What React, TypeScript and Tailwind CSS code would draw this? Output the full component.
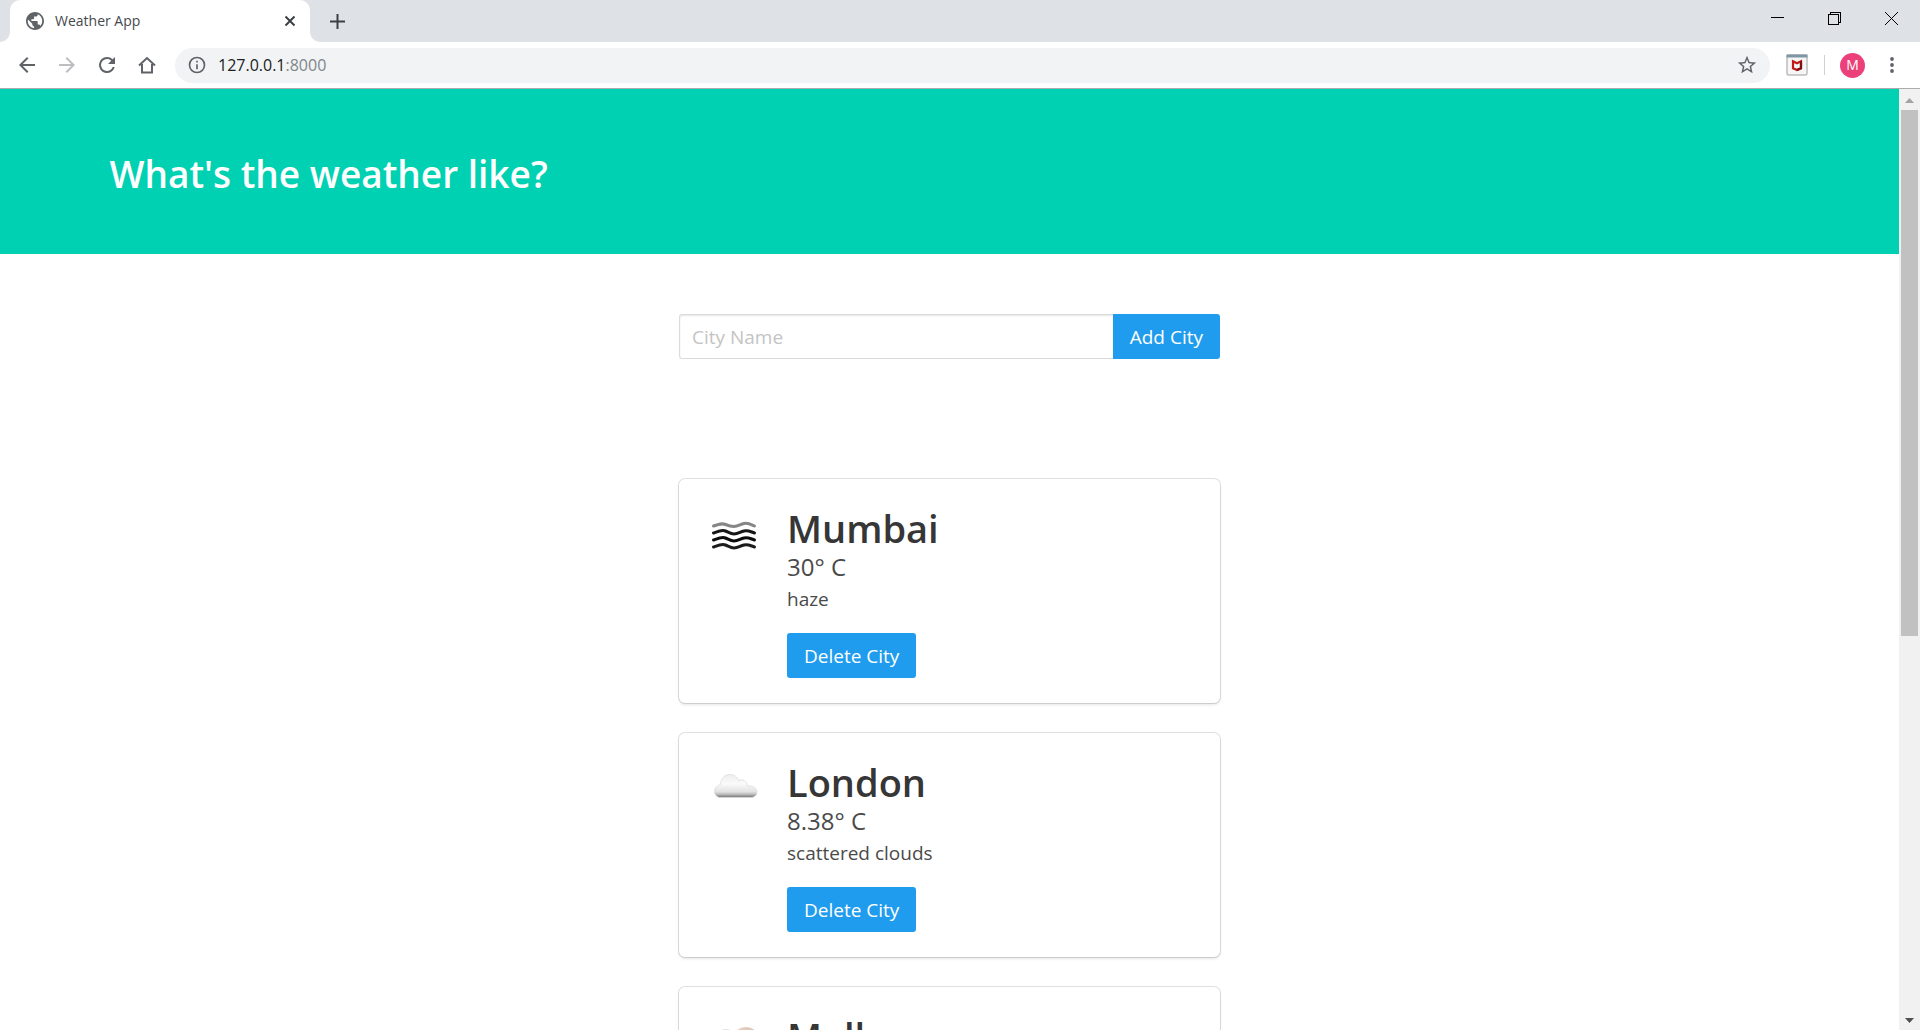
import React from "react";

type IconKind = "mist" | "cloud" | "partly";

interface City {
  name: string;
  temperature: string;
  description: string;
  icon: IconKind;
}

const cities: City[] = [
  { name: "Mumbai", temperature: "30° C", description: "haze", icon: "mist" },
  { name: "London", temperature: "8.38° C", description: "scattered clouds", icon: "cloud" },
  { name: "Melbourne", temperature: "17° C", description: "few clouds", icon: "partly" },
];

function Glyph({ d, className }: { d: string; className: string }) {
  return (
    <svg viewBox="0 0 24 24" className={className} fill="currentColor" aria-hidden="true">
      <path d={d} />
    </svg>
  );
}

const paths = {
  globe:
    "M12 0C5.4 0 0 5.4 0 12s5.4 12 12 12 12-5.4 12-12S18.600 0 12 0zM10.800 21.500C6 21 2.400 17 2.400 12c0-.7.1-1.400.2-2.100L8.400 15.600v1.200c0 1.300 1.100 2.400 2.400 2.400v2.300zM19 18.500c-.3-1-1.200-1.700-2.200-1.700h-1.200v-3.600c0-.7-.5-1.200-1.200-1.200H7.200V9.600h2.400c.7 0 1.200-.5 1.200-1.200V6h2.400c1.300 0 2.400-1.100 2.400-2.400v-.5c3.500 1.400 6 4.900 6 8.900 0 2.500-1 4.800-2.600 6.500z",
  back: "M20 11H7.830l5.590-5.590L12 4l-8 8 8 8 1.410-1.410L7.830 13H20v-2z",
  forward: "M4 13h12.170l-5.590 5.590L12 20l8-8-8-8-1.410 1.410L16.170 11H4v2z",
  reload:
    "M17.650 6.350A7.960 7.960 0 0 0 12 4a8 8 0 1 0 7.730 10h-2.080A6 6 0 1 1 12 6c1.660 0 3.140.69 4.220 1.780L13 11h7V4l-2.350 2.350z",
  info: "M11 7h2v2h-2zm0 4h2v6h-2zm1-9a10 10 0 1 0 0 20 10 10 0 0 0 0-20zm0 18a8 8 0 1 1 0-16 8 8 0 0 1 0 16z",
  star: "M22 9.240l-7.190-.62L12 2 9.190 8.630 2 9.240l5.460 4.730L5.820 21 12 17.270 18.180 21l-1.630-7.030L22 9.240zM12 15.400l-3.760 2.270 1-4.280-3.320-2.880 4.380-.38L12 6.100l1.710 4.040 4.380.38-3.320 2.880 1 4.280L12 15.400z",
};

function WeatherIcon({ kind }: { kind: IconKind }) {
  if (kind === "mist") {
    return (
      <svg viewBox="0 0 63 63" className="size-[63px] shrink-0" fill="none" strokeWidth="3" strokeLinecap="round" role="img" aria-label="haze">
        <path stroke="#868686" d="M9.500 22C15 20 18 19 21.500 20.500C25 22 27 22.500 30 22.500C34 22.500 36 20.500 40 19.500C44 18.500 46 20 50.500 22" />
        <path stroke="#161616" d="M9.500 29C15 27 18 25.500 21.500 27C25 28.500 27 30 30 30C34 30 36 28 40 27C44 26 46 27.500 50.500 29" />
        <path stroke="#0b0b0b" d="M9.500 36C15 34 18 32.500 21.500 34C25 35.500 27 37 30 37C34 37 36 35 40 34C44 33 46 34.500 50.500 36" />
        <path stroke="#1c1c1c" d="M9.500 43C15 41 18 39.500 21.500 41C25 42.500 27 44 30 44C34 44 36 42 40 41C44 40 46 41.500 50.500 43" />
      </svg>
    );
  }
  const gradientId = `cloud-${kind}`;
  return (
    <svg viewBox="0 0 63 63" className="size-[63px] shrink-0" role="img" aria-label={kind === "cloud" ? "scattered clouds" : "few clouds"}>
      <defs>
        <linearGradient id={gradientId} x1="0" y1="0" x2="0" y2="1">
          <stop offset="0" stopColor="#eeeeee" />
          <stop offset="0.4" stopColor="#fafafa" />
          <stop offset="0.75" stopColor="#e2e2e2" />
          <stop offset="0.86" stopColor="#bdbdbd" />
          <stop offset="1" stopColor="#6f6f6f" />
        </linearGradient>
        <linearGradient id="sun" x1="0" y1="0" x2="1" y2="1">
          <stop offset="0" stopColor="#e9d3c4" />
          <stop offset="1" stopColor="#c9b4a6" />
        </linearGradient>
      </defs>
      {kind === "partly" && <circle cx="42" cy="29" r="14" fill="url(#sun)" />}
      <path
        d="M15.500 39.500C12.500 39 10.500 36.500 10.500 33.500C10.500 30 13 27.500 16.500 26.500C17 20.500 20.500 16.500 26 16.500C30 16.500 33 18.500 34.500 22.500C38.500 20.500 43 23 43.500 28C48.500 27.500 53 30 53 34C53 37 51 39 48 39.500Z"
        transform={kind === "partly" ? "translate(-4 1)" : undefined}
        fill={`url(#${gradientId})`}
        stroke="#dcdcdc"
        strokeWidth="0.8"
      />
    </svg>
  );
}

function TabStrip() {
  return (
    <div className="flex h-[42px] shrink-0 bg-[#dee1e6]">
      <div className="w-[10px] bg-white">
        <div className="h-full w-full rounded-br-[10px] bg-[#dee1e6]" />
      </div>
      <div className="flex w-[300px] items-center rounded-t-[10px] bg-white pr-3 pl-4">
        <Glyph d={paths.globe} className="size-[18px] text-[#5f6368]" />
        <span className="ml-[11px] flex-1 text-sm text-[#45494d]">Weather App</span>
        <button type="button" aria-label="Close tab" className="flex size-4 items-center justify-center text-[#3c4043]">
          <svg viewBox="0 0 12 12" className="size-3" stroke="currentColor" strokeWidth="2">
            <path d="M1.500 1.500l9 9M10.500 1.500l-9 9" />
          </svg>
        </button>
      </div>
      <div className="w-[10px] bg-white">
        <div className="h-full w-full rounded-bl-[10px] bg-[#dee1e6]" />
      </div>
      <button type="button" aria-label="New tab" className="flex w-[35px] items-center justify-center text-[#3c4043]">
        <svg viewBox="0 0 15 15" className="size-[15px]" stroke="currentColor" strokeWidth="2">
          <path d="M7.500 0v15M0 7.500h15" />
        </svg>
      </button>
      <div className="ml-auto flex h-9 text-black">
        <button type="button" aria-label="Minimize" className="flex w-[57px] items-center justify-center">
          <svg viewBox="0 0 13 13" className="size-[13px]" stroke="currentColor" shapeRendering="crispEdges">
            <path d="M0 5.500h13" />
          </svg>
        </button>
        <button type="button" aria-label="Restore" className="flex w-[57px] items-center justify-center">
          <svg viewBox="0 0 13 13" className="size-[13px]" fill="none" stroke="currentColor" shapeRendering="crispEdges">
            <path d="M.5 2.500h10v10H.5zM2.500 2V.5h10v10H11" />
          </svg>
        </button>
        <button type="button" aria-label="Close window" className="flex w-[57px] items-center justify-center">
          <svg viewBox="0 0 13 13" className="size-[13px]" stroke="currentColor">
            <path d="M0 0l13 13M13 0L0 13" />
          </svg>
        </button>
      </div>
    </div>
  );
}

function Toolbar() {
  return (
    <div className="flex h-[47px] shrink-0 items-center border-b border-[#a9abad] bg-white pl-[7px] text-[#5f6368]">
      <button type="button" aria-label="Back" className="flex w-10 justify-center">
        <Glyph d={paths.back} className="size-6" />
      </button>
      <button type="button" aria-label="Forward" className="flex w-10 justify-center text-[#bcbec1]">
        <Glyph d={paths.forward} className="size-6" />
      </button>
      <button type="button" aria-label="Reload" className="flex w-10 justify-center">
        <Glyph d={paths.reload} className="size-6" />
      </button>
      <button type="button" aria-label="Home" className="flex w-10 justify-center">
        <svg viewBox="0 0 18 18" className="size-[18px]" fill="none" stroke="currentColor" strokeWidth="2">
          <path d="M1 9.500L9 2l8 7.500M4 8v8.500h10V8" />
        </svg>
      </button>
      <div className="ml-2 flex h-[35px] flex-1 items-center rounded-full bg-[#f1f3f4] pr-3 pl-3">
        <Glyph d={paths.info} className="size-5" />
        <span className="ml-[11px] flex-1 text-base">
          <span className="text-[#202124]">127.0.0.1</span>
          <span className="text-[#80868b]">:8000</span>
        </span>
        <button type="button" aria-label="Bookmark this page">
          <Glyph d={paths.star} className="size-[22px]" />
        </button>
      </div>
      <button type="button" aria-label="Extension" className="ml-4">
        <svg viewBox="0 0 22 22" className="size-[22px]" aria-hidden="true">
          <rect x="1" y="1" width="20" height="20" rx="1.500" fill="#f6f6f6" stroke="#bdbdbd" strokeWidth="1.500" />
          <path d="M.5 .5h21v3H.5z" fill="#7e97a6" />
          <path d="M7 7.200l4 2 4-2v7L11 16l-4-1.800z" fill="none" stroke="#c01818" strokeWidth="2.200" />
          <path d="M15 7.200v7L11 16" fill="none" stroke="#7d1010" strokeWidth="2.200" />
        </svg>
      </button>
      <div className="ml-4 h-5 w-px bg-[#cfd1d4]" />
      <button type="button" className="ml-[15px] flex size-[25px] items-center justify-center rounded-full bg-[#ec407a] text-sm text-white">
        M
      </button>
      <button type="button" aria-label="Menu" className="mr-[18px] ml-[17px] flex w-5 justify-center">
        <svg viewBox="0 0 4 18" className="h-[18px] w-1" fill="currentColor">
          <circle cx="2" cy="3" r="1.900" />
          <circle cx="2" cy="9" r="1.900" />
          <circle cx="2" cy="15" r="1.900" />
        </svg>
      </button>
    </div>
  );
}

function CityCard({ city }: { city: City }) {
  return (
    <article className="flex gap-5 rounded-md bg-white p-[25px] shadow-[0_2px_3px_rgba(10,10,10,0.1),0_0_0_1px_rgba(10,10,10,0.12)]">
      <WeatherIcon kind={city.icon} />
      <div>
        <h2 className="text-[38px] leading-[48px] font-semibold text-[#363636]">{city.name}</h2>
        <p className="text-2xl leading-[30px] text-[#4a4a4a]">{city.temperature}</p>
        <p className="text-[19px] leading-[34px] text-[#4a4a4a]">{city.description}</p>
        <button type="button" className="mt-[17px] h-[45px] rounded-[3px] bg-[#209cee] px-[17px] pt-px text-[19px] text-white">
          Delete City
        </button>
      </div>
    </article>
  );
}

function Scrollbar() {
  return (
    <div className="flex w-[21px] shrink-0 flex-col items-center bg-[#f1f1f1]" aria-hidden="true">
      <div className="flex h-[21px] items-center pt-[2px]">
        <svg viewBox="0 0 9 5" className="h-[5px] w-[9px]" fill="#a3a3a3">
          <path d="M0 5L4.500 0L9 5z" />
        </svg>
      </div>
      <div className="flex w-full flex-1 flex-col px-[2px]">
        <div className="h-[58.5%] bg-[#c1c1c1]" />
      </div>
      <div className="flex h-[21px] items-center pt-[2px]">
        <svg viewBox="0 0 9 5" className="h-[5px] w-[9px]" fill="#505050">
          <path d="M0 0L4.500 5L9 0z" />
        </svg>
      </div>
    </div>
  );
}

export default function App() {
  return (
    <div className="flex h-screen flex-col overflow-hidden bg-white font-['Open_Sans','Noto_Sans',sans-serif]">
      <TabStrip />
      <Toolbar />
      <div className="flex min-h-0 flex-1">
        <main className="min-w-0 flex-1 overflow-hidden">
          <header className="bg-[#00d1b2] pt-[62px] pb-[58px]">
            <div className="mx-auto max-w-[1680px]">
              <h1 className="text-[37px] leading-[45px] font-semibold text-white">What's the weather like?</h1>
            </div>
          </header>
          <div className="mx-auto w-[541px] max-w-full">
            <form className="flex py-[60px]" onSubmit={(e) => e.preventDefault()}>
              <input
                type="text"
                aria-label="City Name"
                placeholder="City Name"
                className="h-[45px] min-w-0 flex-1 rounded-l-[3px] border border-r-0 border-[#dbdbdb] px-3 pt-px text-[19px] text-[#363636] shadow-[inset_0_1px_2px_rgba(10,10,10,0.1)] placeholder:text-[#c4c4c4]"
              />
              <button type="submit" className="h-[45px] rounded-r-[3px] bg-[#209cee] px-[17px] pt-px text-[19px] text-white">
                Add City
              </button>
            </form>
            <section className="flex flex-col gap-[30px] pt-[60px]">
              {cities.map((city) => (
                <CityCard key={city.name} city={city} />
              ))}
            </section>
          </div>
        </main>
        <Scrollbar />
      </div>
    </div>
  );
}
